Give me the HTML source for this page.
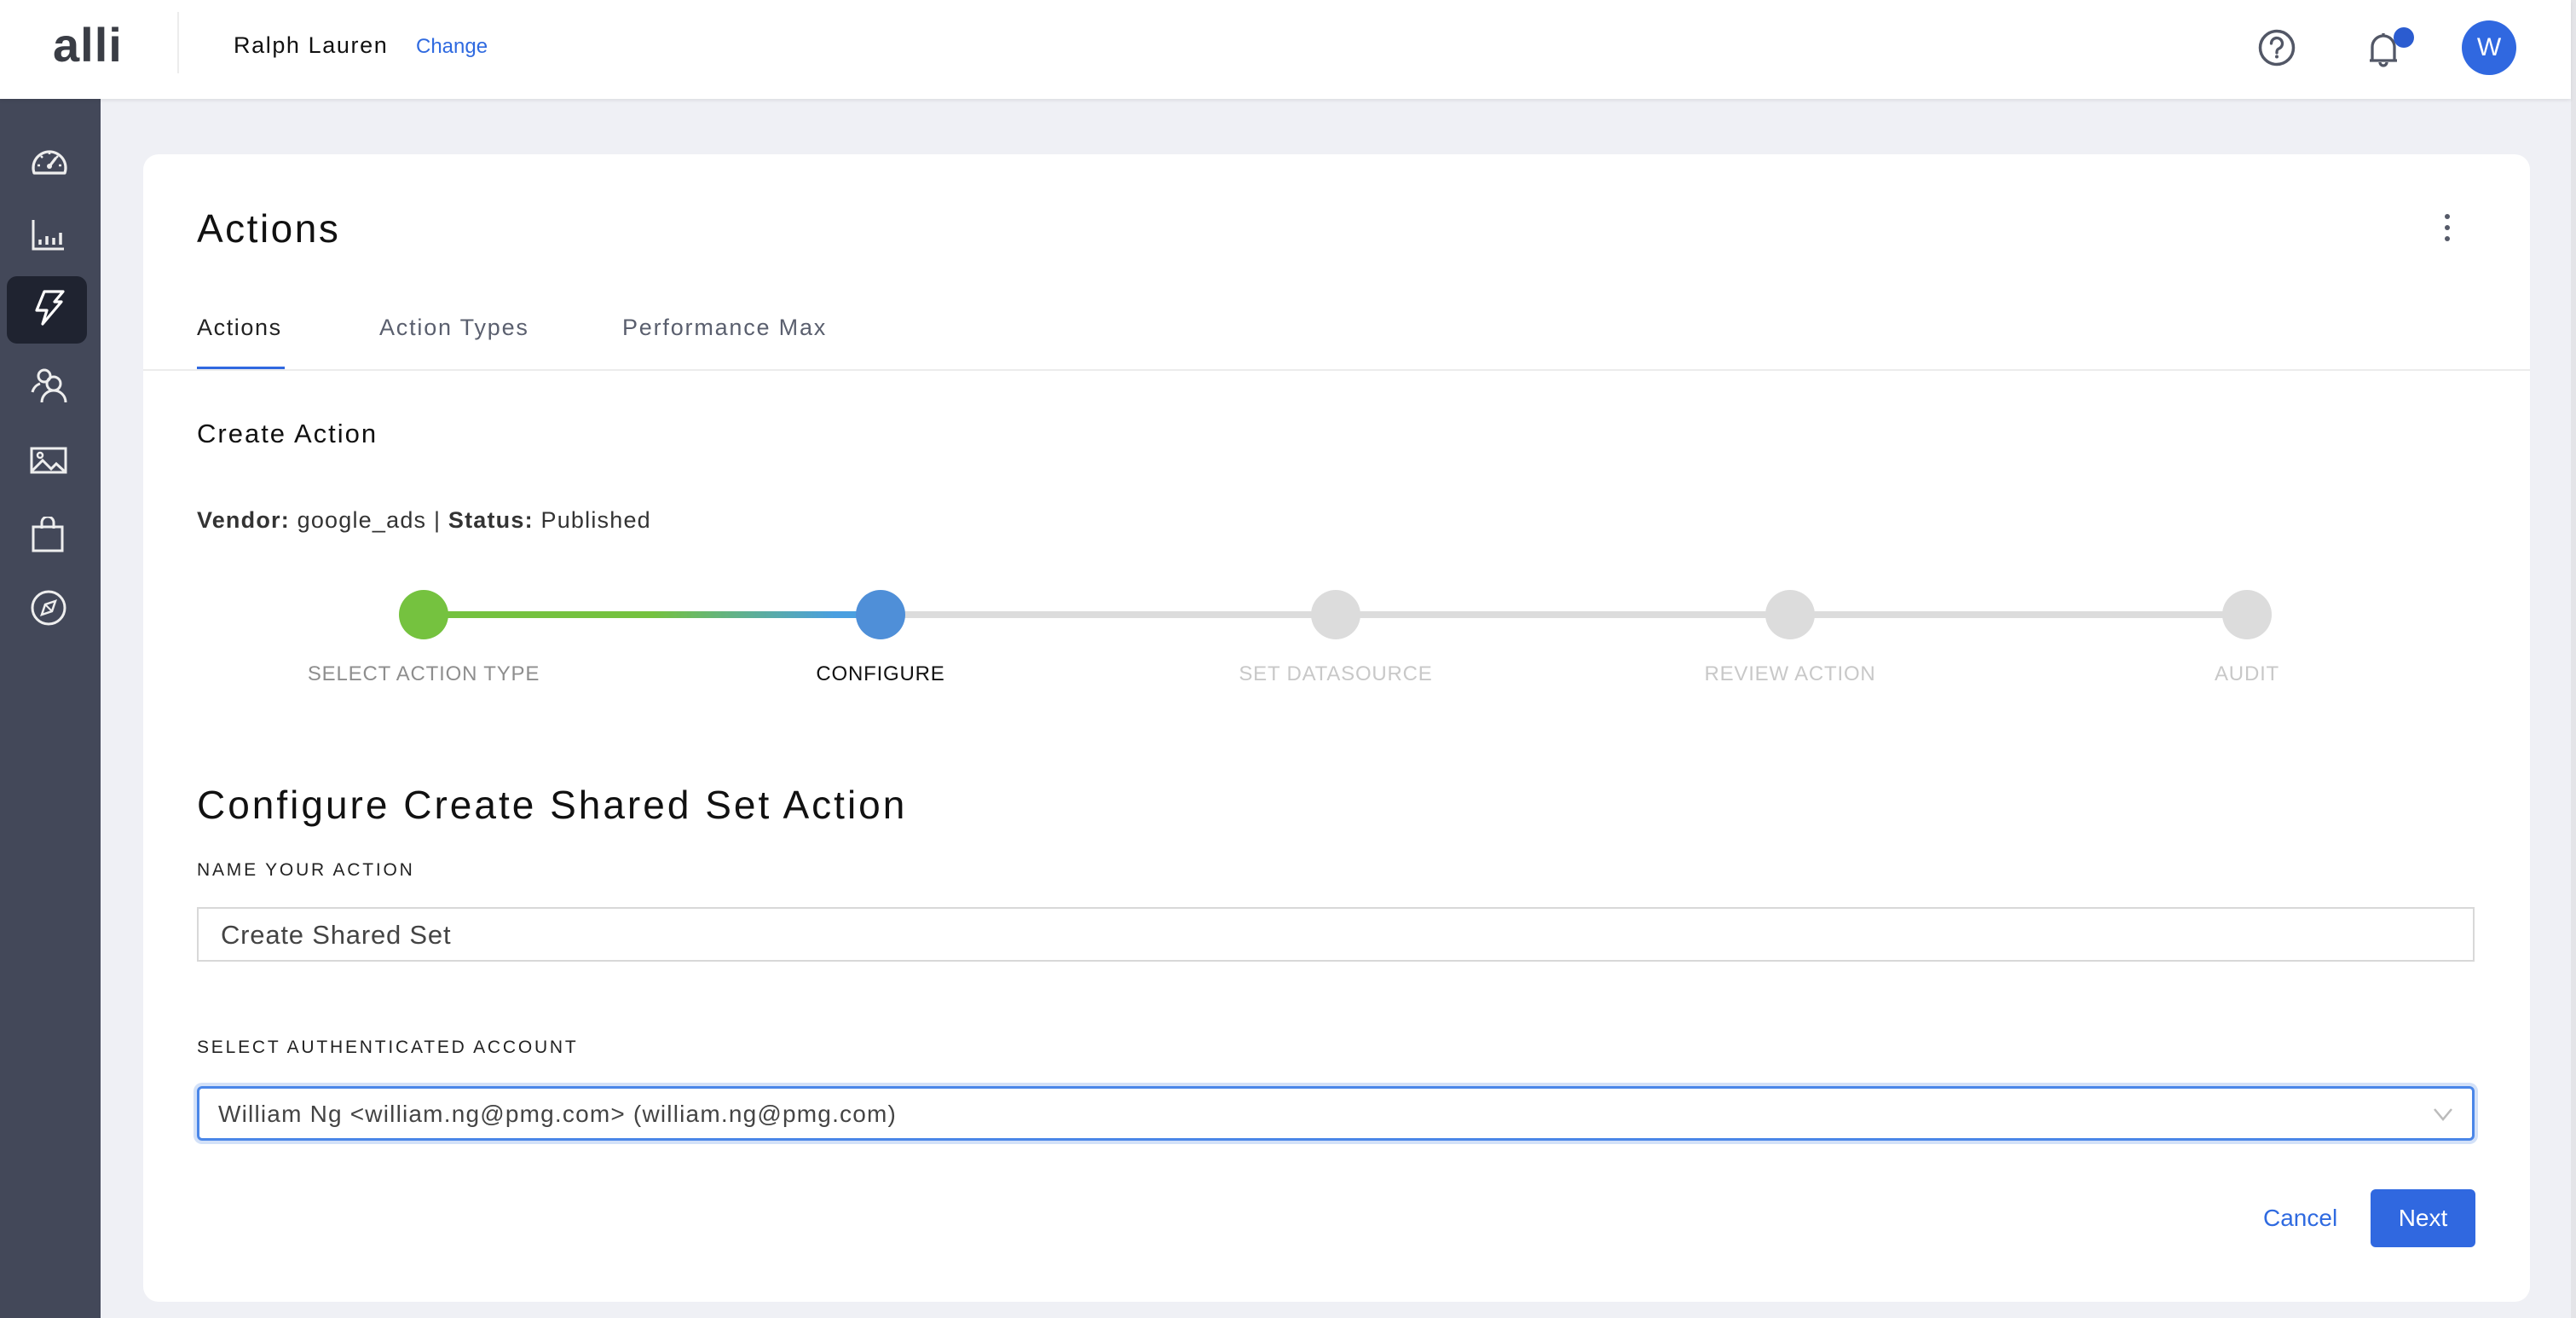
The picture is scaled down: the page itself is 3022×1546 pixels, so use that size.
<!DOCTYPE html>
<html><head><meta charset="utf-8"><style>
*{box-sizing:border-box;margin:0;padding:0}
body{width:3022px;height:1546px;position:relative;background:#eff0f5;font-family:"Liberation Sans",sans-serif;overflow:hidden;color:#1e1e1e}
.abs{position:absolute;white-space:nowrap}
#hdr{position:absolute;left:0;top:0;width:3016px;height:116px;background:#fff;box-shadow:0 2px 4px rgba(0,0,0,.08);z-index:2}
#side{position:absolute;left:0;top:116px;width:118px;height:1430px;background:#434859}
#scroll{position:absolute;left:3016px;top:0;width:6px;height:1546px;background:#e4e4e8}
#card{position:absolute;left:168px;top:181px;width:2800px;height:1346px;background:#fff;border-radius:18px}
.ic{position:absolute;left:35px}
.lbl{font-size:21px;letter-spacing:2.8px;color:#222}
.step{position:absolute;width:58px;height:58px;border-radius:50%;background:#dcdcdc}
.sl{position:absolute;font-size:24px;letter-spacing:0.8px;color:#c8c8c8;transform:translateX(-50%);white-space:nowrap}
</style></head><body>
<div id="hdr">
 <div class="abs" style="left:62px;top:20px;font-size:56px;font-weight:bold;color:#3a3d45;letter-spacing:1px">alli</div>
 <div class="abs" style="left:208px;top:14px;width:2px;height:72px;background:#ececec"></div>
 <div class="abs" style="left:274px;top:38px;font-size:27px;letter-spacing:1.6px;color:#111">Ralph Lauren</div>
 <div class="abs" style="left:488px;top:41px;font-size:24px;color:#2f6ae0">Change</div>
 <svg class="abs" style="left:2648px;top:33px" width="46" height="46" viewBox="0 0 46 46"><circle cx="23" cy="23" r="19.5" fill="none" stroke="#525766" stroke-width="3.5"/><path d="M16.5 18a6.5 6.5 0 1 1 9 6c-2 1-2.5 2-2.5 4v1" fill="none" stroke="#525766" stroke-width="3.3" stroke-linecap="round"/><circle cx="23" cy="33.5" r="2" fill="#525766"/></svg>
 <svg class="abs" style="left:2778px;top:36px" width="36" height="44" viewBox="0 0 36 44"><path d="M5 34V19a13 13 0 0 1 26 0v15M2 35h32M14 37a4 4 0 0 0 8 0M18 3v3" fill="none" stroke="#525766" stroke-width="3.3"/></svg>
 <div class="abs" style="left:2808px;top:32px;width:24px;height:24px;border-radius:50%;background:#2b5cd0"></div>
 <div class="abs" style="left:2888px;top:24px;width:64px;height:64px;border-radius:50%;background:#3068e0;color:#fff;font-size:30px;text-align:center;line-height:64px">W</div>
</div>
<div id="side">
 <svg class="ic" style="top:56px" width="46" height="34" viewBox="0 0 46 34"><path d="M5 31a19 19 0 1 1 36 0z" fill="none" stroke="#eee" stroke-width="3.2" stroke-linejoin="round"/><path d="M23 23l7-9" stroke="#eee" stroke-width="3.2" stroke-linecap="round"/><circle cx="23" cy="23" r="3" fill="#eee"/><path d="M9 22h3M34 22h3M13 11l2 2M33 11l-2 2M23 6v3" stroke="#eee" stroke-width="2.5"/></svg>
 <svg class="ic" style="top:140px" width="46" height="40" viewBox="0 0 46 40"><path d="M4 2v34h36" fill="none" stroke="#eee" stroke-width="3"/><path d="M12 31v-6M20 31v-10M28 31v-8M36 31v-14" stroke="#eee" stroke-width="3.5"/></svg>
 <div class="abs" style="left:8px;top:208px;width:94px;height:79px;border-radius:12px;background:#1f2330"></div>
 <svg class="ic" style="top:224px;left:38px" width="40" height="50" viewBox="0 0 40 50"><path d="M14 2h22l-10 12h8L12 40l5-16H5z" fill="none" stroke="#fff" stroke-width="3.2" stroke-linejoin="round"/></svg>
 <svg class="ic" style="top:314px" width="46" height="44" viewBox="0 0 46 44"><circle cx="17" cy="11" r="7" fill="none" stroke="#eee" stroke-width="3"/><path d="M3 30a14 14 0 0 1 9-10" fill="none" stroke="#eee" stroke-width="3"/><circle cx="28" cy="20" r="8" fill="none" stroke="#eee" stroke-width="3"/><path d="M14 42a14 14 0 0 1 28 0" fill="none" stroke="#eee" stroke-width="3"/></svg>
 <svg class="ic" style="top:408px" width="46" height="36" viewBox="0 0 46 36"><rect x="2" y="2" width="40" height="28" fill="none" stroke="#eee" stroke-width="3"/><circle cx="12" cy="10" r="3" fill="none" stroke="#eee" stroke-width="2.5"/><path d="M3 28l12-12 10 10 6-6 11 10" fill="none" stroke="#eee" stroke-width="3"/></svg>
 <svg class="ic" style="top:490px" width="46" height="42" viewBox="0 0 46 42"><rect x="4" y="12" width="34" height="28" fill="none" stroke="#eee" stroke-width="3"/><path d="M14 14V7a7 7 0 0 1 14 0v7" fill="none" stroke="#eee" stroke-width="3"/></svg>
 <svg class="ic" style="top:575px" width="46" height="46" viewBox="0 0 46 46"><circle cx="22" cy="22" r="19" fill="none" stroke="#eee" stroke-width="3"/><path d="M30 14l-12 4-4 12 12-4z" fill="none" stroke="#eee" stroke-width="2.5"/><path d="M18 18l8 8" stroke="#eee" stroke-width="2"/></svg>
</div>
<div id="scroll"></div>
<div id="card">
 <div class="abs" style="left:63px;top:60px;font-size:46px;letter-spacing:2.5px;color:#111">Actions</div>
 <div class="abs" style="left:2700px;top:70px;width:6px;height:6px;border-radius:50%;background:#555a68;box-shadow:0 13px 0 #555a68,0 26px 0 #555a68"></div>
 <div class="abs" style="left:63px;top:188px;font-size:27px;letter-spacing:1.6px;color:#222">Actions</div>
 <div class="abs" style="left:277px;top:188px;font-size:27px;letter-spacing:1.8px;color:#5a5f6e">Action Types</div>
 <div class="abs" style="left:562px;top:188px;font-size:27px;letter-spacing:1.8px;color:#5a5f6e">Performance Max</div>
 <div class="abs" style="left:0;top:252px;width:2800px;height:2px;background:#ececec"></div>
 <div class="abs" style="left:63px;top:249px;width:103px;height:3px;background:#3068e0"></div>
 <div class="abs" style="left:63px;top:310px;font-size:31px;letter-spacing:2px;color:#111">Create Action</div>
 <div class="abs" style="left:63px;top:414px;font-size:27px;letter-spacing:1.2px;color:#333"><b>Vendor:</b> google_ads | <b>Status:</b> Published</div>
 <div class="abs" style="left:329px;top:536px;width:536px;height:8px;background:linear-gradient(90deg,#75c23f 0%,#75c23f 50%,#4a9fe0 90%)"></div>
 <div class="abs" style="left:865px;top:536px;width:1603px;height:8px;background:#dcdcdc"></div>
 <div class="step" style="left:300px;top:511px;background:#75c23f"></div>
 <div class="step" style="left:836px;top:511px;background:#4f8fd8"></div>
 <div class="step" style="left:1370px;top:511px"></div>
 <div class="step" style="left:1903px;top:511px"></div>
 <div class="step" style="left:2439px;top:511px"></div>
 <div class="sl" style="left:329px;top:596px;color:#8e8e8e">SELECT ACTION TYPE</div>
 <div class="sl" style="left:865px;top:596px;color:#111">CONFIGURE</div>
 <div class="sl" style="left:1399px;top:596px">SET DATASOURCE</div>
 <div class="sl" style="left:1932px;top:596px">REVIEW ACTION</div>
 <div class="sl" style="left:2468px;top:596px">AUDIT</div>
 <div class="abs" style="left:63px;top:736px;font-size:46px;letter-spacing:3px;color:#111">Configure Create Shared Set Action</div>
 <div class="abs lbl" style="left:63px;top:828px">NAME YOUR ACTION</div>
 <div class="abs" style="left:63px;top:883px;width:2672px;height:64px;border:2px solid #d8d8d8;font-size:31px;letter-spacing:0.8px;color:#444;padding:13px 0 0 26px">Create Shared Set</div>
 <div class="abs lbl" style="left:63px;top:1036px">SELECT AUTHENTICATED ACCOUNT</div>
 <div class="abs" style="left:63px;top:1093px;width:2672px;height:64px;border:3px solid #4a86e8;border-radius:6px;box-shadow:0 0 0 4px #d3e1f8;font-size:28px;letter-spacing:1.2px;color:#444;padding:14px 0 0 22px">William Ng &lt;william.ng@pmg.com&gt; (william.ng@pmg.com)
  <svg style="position:absolute;right:22px;top:22px" width="24" height="16" viewBox="0 0 24 16"><path d="M2 2l10 12L22 2" fill="none" stroke="#bbb" stroke-width="2.5"/></svg></div>
 <div class="abs" style="left:2487px;top:1232px;font-size:28px;color:#2f6ae0">Cancel</div>
 <div class="abs" style="left:2613px;top:1214px;width:123px;height:68px;border-radius:6px;background:#3068e0;color:#fff;font-size:28px;text-align:center;line-height:68px">Next</div>
</div>
</body></html>
